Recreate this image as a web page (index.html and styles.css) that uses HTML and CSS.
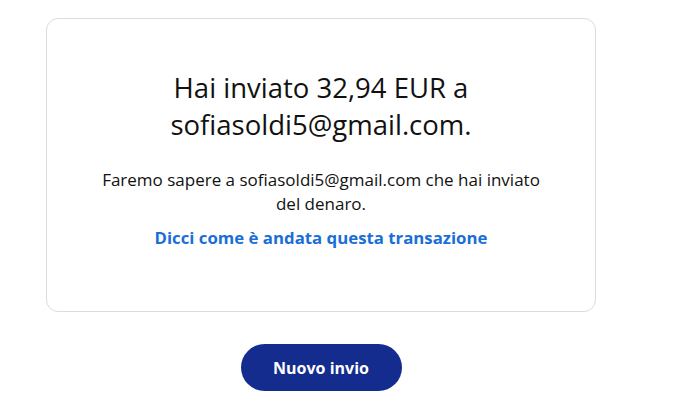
FILE: index.html
```html
<!DOCTYPE html>
<html lang="it">
<head>
<meta charset="utf-8">
<link rel="stylesheet" href="styles.css">
</head>
<body>
<main class="page">
  <section class="card">
    <h1 class="title">Hai inviato 32,94 EUR a<br>sofiasoldi5@gmail.com.</h1>
    <p class="note">Faremo sapere a sofiasoldi5@gmail.com che hai inviato<br>del denaro.</p>
    <a class="feedback" href="#">Dicci come è andata questa transazione</a>
  </section>
  <div class="actions">
    <button class="primary" type="button">Nuovo invio</button>
  </div>
</main>
</body>
</html>
```

FILE: styles.css
```css
* { box-sizing: border-box; }
html, body { margin: 0; padding: 0; background: #ffffff; }
body {
  font-family: "Open Sans", "Noto Sans", sans-serif;
  color: #001435;
  width: 690px;
  height: 407px;
  overflow: hidden;
}
.page {
  display: flex;
  flex-direction: column;
  padding: 18px 0 0 46px;
  width: 642px;
}
.card {
  width: 550px;
  height: 294px;
  border: 1px solid #dcdcdc;
  border-radius: 12px;
  display: flex;
  flex-direction: column;
  align-items: center;
  text-align: center;
  padding-top: 50px;
}
.title {
  margin: 0;
  font-size: 27.5px;
  font-weight: 400;
  line-height: 37px;
  color: #111111;
}
.note {
  margin: 25px 0 0;
  font-size: 17px;
  line-height: 24px;
  color: #111111;
}
.feedback {
  margin-top: 10px;
  font-size: 16.8px;
  font-weight: 700;
  color: #1a6ed8;
  text-decoration: none;
  line-height: 24px;
}
.actions {
  display: flex;
  justify-content: center;
  padding-top: 32px;
  width: 550px;
}
.primary {
  width: 161px;
  height: 47px;
  border: none;
  border-radius: 24px;
  background: #142c8e;
  color: #ffffff;
  font-family: "Open Sans", "Noto Sans", sans-serif;
  font-size: 16px;
  font-weight: 700;
}
```
